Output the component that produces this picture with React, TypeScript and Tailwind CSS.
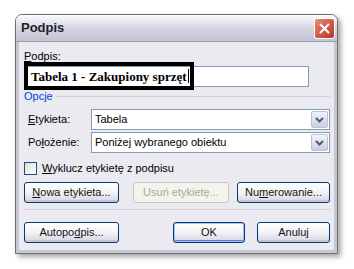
import React from "react";

const ui = { fontFamily: '"Liberation Sans", Arial, sans-serif' };

function XPButton({ children, disabled = false, isDefault = false, w }: { children: React.ReactNode; disabled?: boolean; isDefault?: boolean; w: string }) {
  if (disabled) {
    return (
      <div className={`${w} h-[21px] rounded-[3px] border border-[#c9c7ba] bg-[#f4f3ee] flex items-center justify-center text-[#aca899] text-[11px] leading-[13px]`}>
        {children}
      </div>
    );
  }
  return (
    <div className={`${w} h-[21px] rounded-[3px] border border-[#003c74] bg-gradient-to-b from-[#ffffff] via-[#f3f3f6] to-[#d6d3e2] flex items-center justify-center text-[#111] text-[11px] leading-[13px] ${isDefault ? "shadow-[inset_0_0_0_1px_#a8c0ee,inset_0_-1px_0_1px_#5a83d8]" : "shadow-[inset_0_-2px_0_#c6c5d7]"}`}>
      {children}
    </div>
  );
}

function Chevron() {
  return (
    <div className="w-[17px] h-[17px] mr-[1px] rounded-[2px] border border-[#b9c2d8] bg-gradient-to-b from-[#f3f4f8] to-[#c9cfe0] flex items-center justify-center">
      <svg width="9" height="6" viewBox="0 0 9 6">
        <path d="M1 1 L4.5 4.5 L8 1" stroke="#4d5a75" strokeWidth="2" fill="none" />
      </svg>
    </div>
  );
}

function Select({ value }: { value: string }) {
  return (
    <div className="w-[239px] h-[21px] border border-[#7f9db9] bg-white flex items-center justify-between">
      <span className="pl-[3px] text-[11px] leading-[13px] text-black">{value}</span>
      <Chevron />
    </div>
  );
}

export default function App() {
  return (
    <div className="w-[354px] h-[269px] bg-white pl-[15px] pt-[14px]" style={ui}>
      <div className="w-[323px] h-[240px] rounded-t-[7px] border border-[#6f6f7c] bg-[#ebeaf0] shadow-[3px_3px_5px_rgba(0,0,0,0.35)] flex flex-col overflow-hidden">
        {/* title bar */}
        <div className="h-[27px] shrink-0 bg-gradient-to-b from-[#fbfbfd] via-[#d6d6e2] to-[#c2c2d3] border-b border-[#9c9cab] flex items-center justify-between pl-[5px] pr-[2px]">
          <span className="text-[13px] font-bold text-[#1f1f2c]" style={{ fontFamily: '"Liberation Sans", Arial, sans-serif' }}>Podpis</span>
          <div className="w-[21px] h-[21px] rounded-[3px] border border-white bg-gradient-to-br from-[#e98a7b] via-[#d35b49] to-[#b33a2a] flex items-center justify-center">
            <svg width="11" height="11" viewBox="0 0 11 11">
              <path d="M1.5 1.5 L9.5 9.5 M9.5 1.5 L1.5 9.5" stroke="white" strokeWidth="2" strokeLinecap="round" />
            </svg>
          </div>
        </div>
        {/* body */}
        <div className="flex-1 border-x-[3px] border-b-[3px] border-[#c7c7d2] pl-[5px] pr-[4px] flex flex-col text-[11px] leading-[13px] text-black">
          <div className="mt-[8px] h-[13px]"><span className="underline">P</span>odpis:</div>
          <div className="relative mt-[3px] w-[285px] h-[21px] border border-[#7f9db9] bg-white">
            <div className="absolute left-[-1px] top-[-5px] w-[170px] h-[28px] border-[4px] border-black flex items-center pl-[3px]">
              <span className="text-[13px] leading-[15px] font-bold text-black" style={{ fontFamily: '"Liberation Serif", "Times New Roman", serif' }}>Tabela 1 - Zakupiony sprzęt</span>
              <span className="ml-[1px] w-[1px] h-[14px] bg-black" />
            </div>
          </div>
          <div className="mt-[3px] h-[13px] flex items-center">
            <span className="text-[#0046d5]">Opcje</span>
            <div className="ml-[3px] flex-1 h-[1px] bg-[#d0d0d8]" />
          </div>
          <div className="mt-[6px] flex items-center">
            <span className="w-[67px] pl-[4px]"><span className="underline">E</span>tykieta:</span>
            <Select value="Tabela" />
          </div>
          <div className="mt-[2px] flex items-center">
            <span className="w-[67px] pl-[4px]">Po<span className="underline">ł</span>ożenie:</span>
            <Select value="Poniżej wybranego obiektu" />
          </div>
          <div className="mt-[9px] h-[13px] flex items-center">
            <div className="w-[13px] h-[13px] border border-[#1c5180] bg-gradient-to-br from-[#dcdcd6] to-white" />
            <span className="ml-[5px]"><span className="underline">W</span>yklucz etykietę z podpisu</span>
          </div>
          <div className="mt-[7px] flex items-center">
            <XPButton w="w-[96px]"><span className="underline">N</span>owa etykieta...</XPButton>
            <div className="ml-[14px]"><XPButton w="w-[96px]" disabled>Usuń etykietę...</XPButton></div>
            <div className="ml-[8px]"><XPButton w="w-[93px]">Nu<span className="underline">m</span>erowanie...</XPButton></div>
          </div>
          <div className="mt-[6px] h-[1px] bg-[#d0d0d8]" />
          <div className="mt-[12px] flex items-center">
            <XPButton w="w-[96px]">Autopo<span className="underline">d</span>pis...</XPButton>
            <div className="ml-[54px]"><XPButton w="w-[72px]" isDefault>OK</XPButton></div>
            <div className="ml-[12px]"><XPButton w="w-[73px]">Anuluj</XPButton></div>
          </div>
        </div>
      </div>
    </div>
  );
}
